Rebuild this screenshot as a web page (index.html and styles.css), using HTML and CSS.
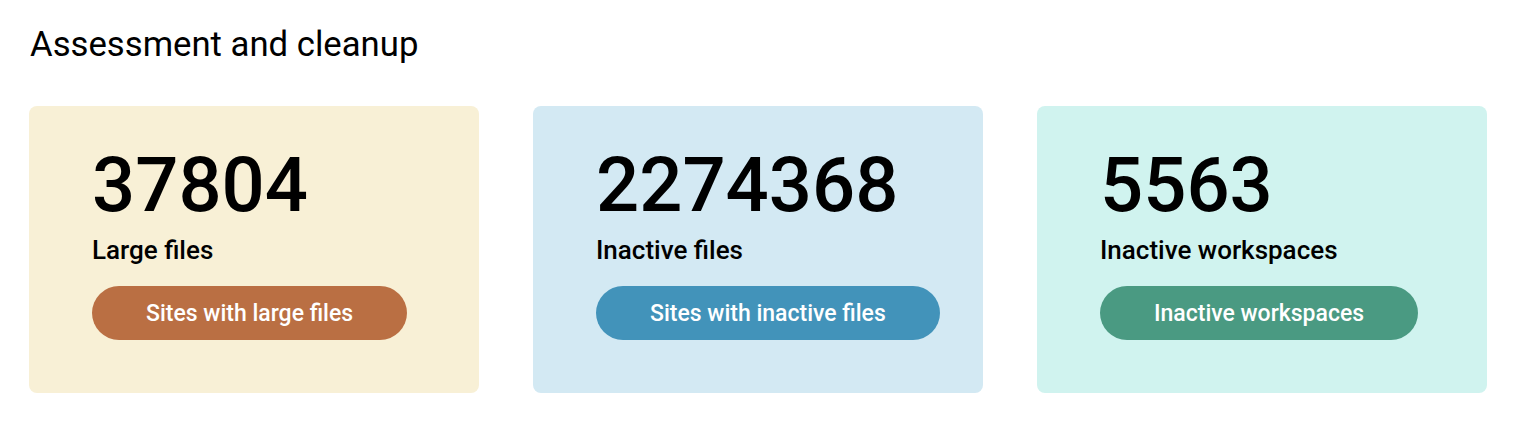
FILE: index.html
```html
<!DOCTYPE html>
<html lang="en">
<head>
<meta charset="utf-8">
<title>Assessment and cleanup</title>
<link rel="stylesheet" href="styles.css">
</head>
<body>
<main class="page">
  <h1 class="title">Assessment and cleanup</h1>
  <div class="cards">
    <section class="card card-large">
      <div class="count">37804</div>
      <div class="label">Large files</div>
      <button class="btn">Sites with large files</button>
    </section>
    <section class="card card-inactive">
      <div class="count">2274368</div>
      <div class="label">Inactive files</div>
      <button class="btn">Sites with inactive files</button>
    </section>
    <section class="card card-workspaces">
      <div class="count">5563</div>
      <div class="label">Inactive workspaces</div>
      <button class="btn">Inactive workspaces</button>
    </section>
  </div>
</main>
</body>
</html>
```

FILE: styles.css
```css
* { box-sizing: border-box; }
html, body { margin: 0; padding: 0; background: #ffffff; }
body {
  font-family: Roboto, "Liberation Sans", Arial, sans-serif;
  color: #000000;
}
.page {
  padding: 24px 26px 0 29px;
}
.title {
  margin: 0 0 0 1px;
  font-size: 34.7px;
  font-weight: 400;
  line-height: 40px;
}
.cards {
  margin-top: 42px;
  display: grid;
  grid-template-columns: repeat(3, 450px);
  column-gap: 54px;
}
.card {
  border-radius: 8px;
  padding: 41px 63px 53px;
  display: flex;
  flex-direction: column;
  align-items: flex-start;
}
.count {
  font-size: 76px;
  line-height: 76px;
  font-weight: 500;
}
.label {
  margin-top: 12px;
  font-size: 26px;
  line-height: 30px;
  font-weight: 500;
}
.btn {
  margin-top: 21px;
  height: 54px;
  padding: 0 54px;
  border: none;
  border-radius: 27px;
  font-family: inherit;
  font-size: 23px;
  font-weight: 500;
  color: #ffffff;
  white-space: nowrap;
  cursor: pointer;
}
.card-large { background: #f8f0d6; }
.card-large .btn { background: #ba6f43; }
.card-inactive { background: #d3e9f3; }
.card-inactive .btn { background: #4293ba; }
.card-workspaces { background: #d0f3ef; }
.card-workspaces .btn { background: #4a9a82; }
```
